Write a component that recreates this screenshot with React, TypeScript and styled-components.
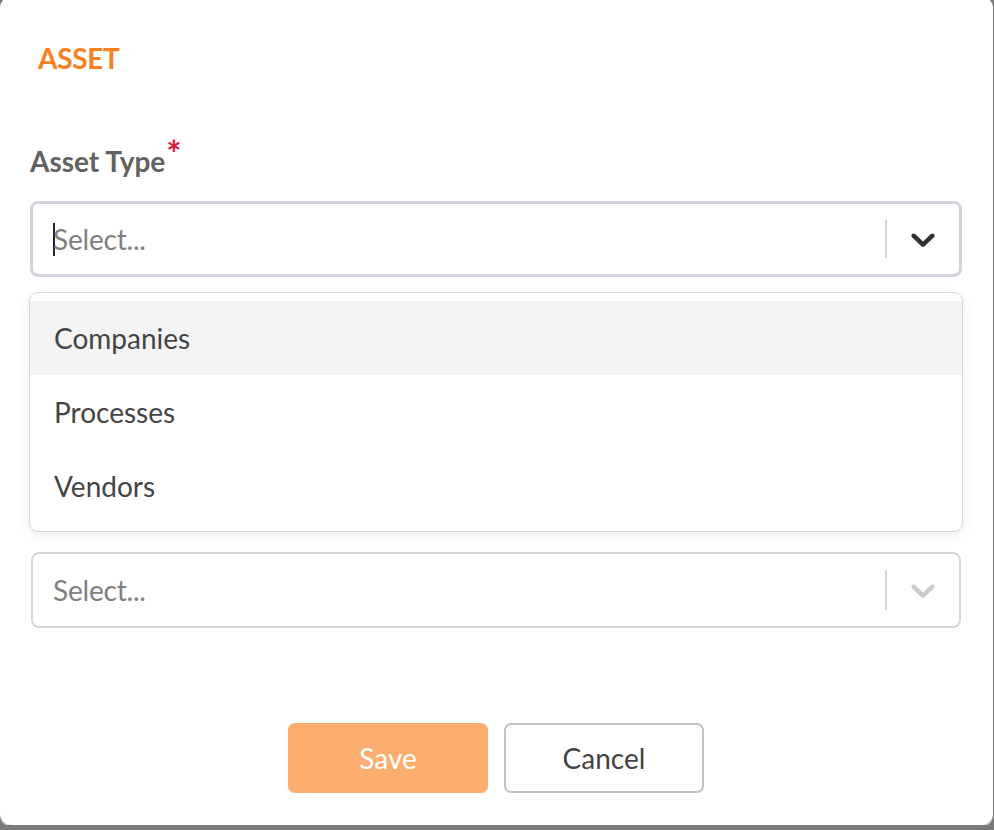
import styled, { createGlobalStyle } from "styled-components";

const GlobalStyle = createGlobalStyle`
  html, body {
    margin: 0;
    padding: 0;
    background: #7b7b7b;
    font-family: Lato, "Noto Sans", sans-serif;
    overflow: hidden;
  }
`;

const Modal = styled.div`
  width: 993px;
  height: 829px;
  margin-top: -4px;
  box-sizing: border-box;
  background: #fff;
  border-radius: 12px;
  box-shadow: 0 2px 0 #c9c9c9;
  padding: 45px 31px 0 30px;
  display: flex;
  flex-direction: column;
`;

const Title = styled.h2`
  margin: 0 0 0 8px;
  font-size: 28px;
  line-height: 34px;
  font-weight: 700;
  color: #f5821f;
  letter-spacing: -0.3px;
`;

const Field = styled.div<{ $top: number }>`
  display: flex;
  flex-direction: column;
  margin-top: ${(p) => p.$top}px;
`;

const Label = styled.label`
  font-size: 28px;
  line-height: 34px;
  height: 34px;
  font-weight: 700;
  color: #626262;
  margin-bottom: 23px;
`;

const Required = styled.span`
  color: #e3173e;
  font-size: 36px;
  line-height: 0;
  font-weight: 700;
  position: relative;
  top: -5px;
  margin-left: 1px;
`;

const SelectWrapper = styled.div`
  position: relative;
`;

const Control = styled.div<{ $focused?: boolean }>`
  height: 76px;
  box-sizing: border-box;
  display: flex;
  align-items: center;
  background: #fff;
  border: ${(p) => (p.$focused ? "3px solid #d0d5dd" : "2px solid #d6d6d6")};
  border-radius: 8px;
  margin: ${(p) => (p.$focused ? "0" : "0 1px")};
`;

const ValueContainer = styled.div`
  flex: 1;
  display: flex;
  align-items: center;
  padding-left: 20px;
`;

const Caret = styled.span`
  display: inline-block;
  width: 2px;
  height: 33px;
  background: #222;
  margin-right: -2px;
`;

const Placeholder = styled.span`
  font-size: 28px;
  line-height: 34px;
  color: #808080;
  letter-spacing: -0.2px;
`;

const Indicators = styled.div`
  display: flex;
  align-self: stretch;
  align-items: center;
`;

const Separator = styled.span`
  width: 2px;
  align-self: stretch;
  margin: 16px 0;
  background: #d4d4d4;
`;

const Chevron = styled.div<{ $muted?: boolean }>`
  padding: 0 16px;
  display: flex;
  color: ${(p) => (p.$muted ? "#cccccc" : "#333333")};
`;

const Menu = styled.div`
  position: absolute;
  top: calc(100% + 16px);
  left: 0;
  right: 0;
  z-index: 2;
  background: #fff;
  border-radius: 8px;
  padding: 8px 0;
  box-shadow: 0 0 0 1px rgba(0, 0, 0, 0.13), 0 4px 14px rgba(0, 0, 0, 0.08);
`;

const Option = styled.div<{ $active?: boolean }>`
  height: 74px;
  display: flex;
  align-items: center;
  padding: 0 24px;
  font-size: 28px;
  color: #444;
  background: ${(p) => (p.$active ? "#f4f4f4" : "transparent")};
`;

const Footer = styled.div`
  display: flex;
  justify-content: center;
  gap: 16px;
  margin-top: 95px;
`;

const Button = styled.button<{ $primary?: boolean }>`
  width: 200px;
  height: 70px;
  border-radius: 7px;
  font-family: Lato, "Noto Sans", sans-serif;
  font-size: 28px;
  cursor: pointer;
  border: ${(p) => (p.$primary ? "none" : "2px solid #c4c4c4")};
  background: ${(p) => (p.$primary ? "#fcae70" : "#fff")};
  color: ${(p) => (p.$primary ? "#fff" : "#444")};
`;

function ChevronIcon() {
  return (
    <svg width="40" height="40" viewBox="0 0 20 20" fill="currentColor">
      <path d="M4.516 7.548c0.436-0.446 1.043-0.481 1.576 0l3.908 3.747 3.908-3.747c0.533-0.481 1.141-0.446 1.574 0 0.436 0.445 0.408 1.197 0 1.615-0.406 0.418-4.695 4.502-4.695 4.502-0.217 0.223-0.502 0.335-0.787 0.335s-0.57-0.112-0.789-0.335c0 0-4.287-4.084-4.695-4.502s-0.436-1.17 0-1.615z" />
    </svg>
  );
}

const options = ["Companies", "Processes", "Vendors"];

function App() {
  return (
    <>
      <GlobalStyle />
      <Modal>
        <Title>ASSET</Title>
        <Field $top={69}>
          <Label>
            Asset Type<Required>*</Required>
          </Label>
          <SelectWrapper>
            <Control $focused>
              <ValueContainer>
                <Caret />
                <Placeholder>Select...</Placeholder>
              </ValueContainer>
              <Indicators>
                <Separator />
                <Chevron>
                  <ChevronIcon />
                </Chevron>
              </Indicators>
            </Control>
            <Menu>
              {options.map((o, i) => (
                <Option key={o} $active={i === 0}>
                  {o}
                </Option>
              ))}
            </Menu>
          </SelectWrapper>
        </Field>
        {/* second field's label sits under the open menu */}
        <Field $top={275}>
          <Control>
            <ValueContainer>
              <Placeholder>Select...</Placeholder>
            </ValueContainer>
            <Indicators>
              <Separator />
              <Chevron $muted>
                <ChevronIcon />
              </Chevron>
            </Indicators>
          </Control>
        </Field>
        <Footer>
          <Button $primary>Save</Button>
          <Button>Cancel</Button>
        </Footer>
      </Modal>
    </>
  );
}

export default App;
